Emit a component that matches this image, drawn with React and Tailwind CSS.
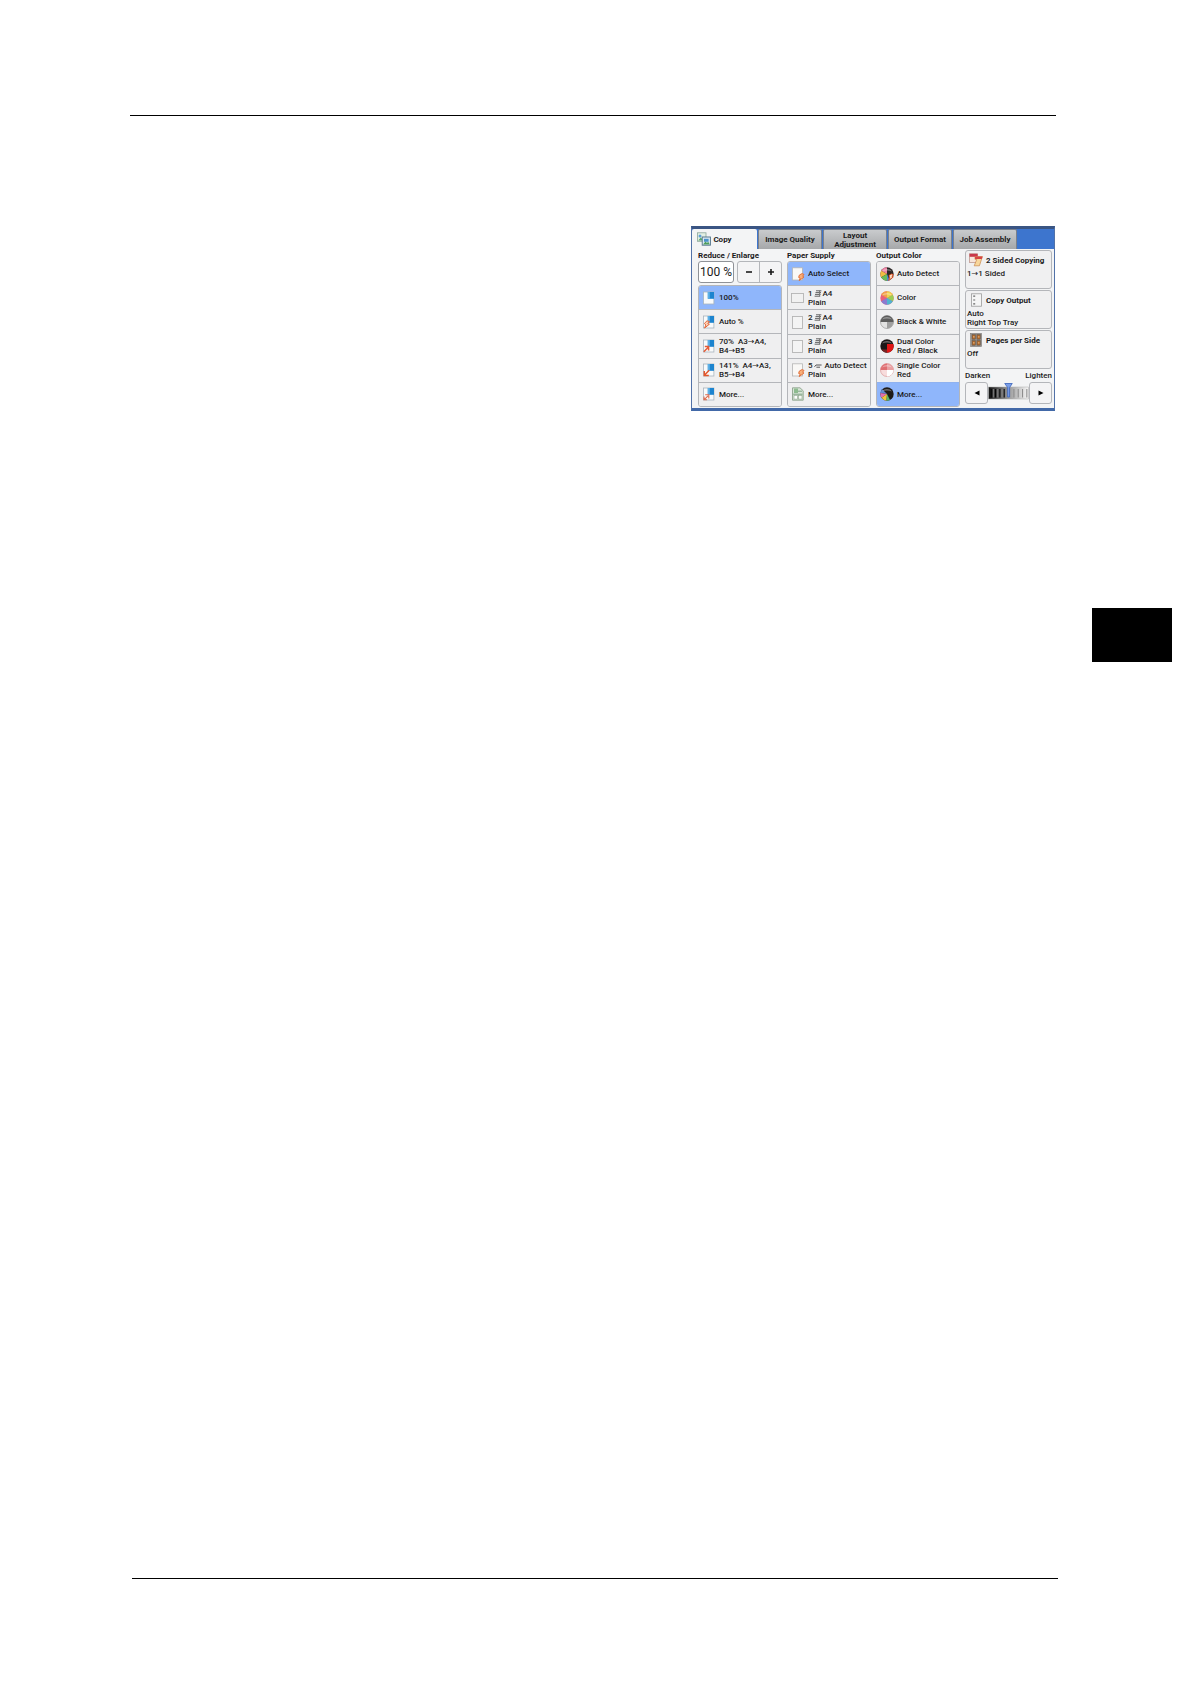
import React, { useState } from "react";

const BLACK = "#1b1b1b";

function CopyIcon() {
  return (
    <svg viewBox="0 0 14 14" className="h-[14px] w-[14px] shrink-0" aria-hidden="true">
      <rect x="0.5" y="0.8" width="8.5" height="8.5" fill="#e3efe3" stroke="#8aa59a" strokeWidth="0.8" />
      <circle cx="3" cy="4" r="1.5" fill="#5d9fd8" />
      <path d="M1.2 8.6 3.8 5.4 6.5 8.6z" fill="#58a86a" />
      <rect x="5.2" y="5" width="8.2" height="8.2" fill="#dbe9f3" stroke="#4d6f86" strokeWidth="0.9" />
      <rect x="7" y="6.8" width="4.6" height="3" fill="#4b93cc" />
      <path d="M6 12.6 8.5 9.6 10 11 11.2 9.8 12.9 12.6z" fill="#4e9e5c" />
    </svg>
  );
}

function ScaleIcon({ kind }) {
  return (
    <svg viewBox="0 0 12 14" className="h-[14px] w-[12px] shrink-0" aria-hidden="true">
      <rect x="0.5" y="1" width="10.4" height="12" fill="#f8fafb" stroke="#a9b4bd" strokeWidth="0.8" />
      <rect x="4.8" y="1" width="6.2" height="6.8" fill="#1c84cf" />
      <rect x="4.8" y="1" width="2" height="6.8" fill="#5db0e6" />
      {kind === "auto" && (
        <path d="M1.4 8.4 4 5.8 6.4 6.6 4.8 8.6 6.4 9.2 1.6 13 2.8 10z" fill="#fbd0b4" stroke="#e2592a" strokeWidth="0.9" />
      )}
      {kind === "reduce" && (
        <path d="M0.8 12.8 5 8.4M1.8 7.6H5.6V11.6" fill="none" stroke="#e45c37" strokeWidth="1.5" />
      )}
      {kind === "enlarge" && (
        <path d="M6.2 7.2 1.6 12M1.3 8V12.4H5.8" fill="none" stroke="#e4572b" strokeWidth="1.5" />
      )}
      {kind === "more" && (
        <path d="M1 12.8 5 8.8M2.2 7.8H5.8V11.4M1 9.5V12.8H4" fill="none" stroke="#df6b4d" strokeWidth="1.1" />
      )}
    </svg>
  );
}

function PaperIcon({ kind }) {
  return (
    <svg viewBox="0 0 14 14" className="h-[14px] w-[14px] shrink-0" aria-hidden="true">
      {kind === "wide" && <rect x="0.5" y="2.5" width="12" height="9" fill="#f1f1f1" stroke="#b4b4b4" strokeWidth="0.9" />}
      {kind === "tall" && <rect x="1.5" y="1.5" width="10" height="12" fill="#f4f4f4" stroke="#b4b4b4" strokeWidth="0.9" />}
      {(kind === "auto" || kind === "bypass") && (
        <>
          <rect x="1.4" y="0.8" width="10" height="12.2" fill="#f9f8f6" stroke="#b5b5b5" strokeWidth="0.8" />
          <path d="M8.4 8 11 6.6 13 7.4 11.6 9.2 13 10 8.2 13.6 9.2 11 7.6 10.4z" fill="#f8b07a" stroke="#e06a34" strokeWidth="0.9" />
        </>
      )}
      {kind === "more" && (
        <>
          <path d="M1.5 0.8H9l3.2 3V13.2H1.5z" fill="#d9e6d8" stroke="#839a83" strokeWidth="0.8" />
          <path d="M3 1.6H7V6H3z" fill="#8dbb8f" />
          <path d="M2.2 7.2H11.5M7 4.2H11" stroke="#7ea384" strokeWidth="1" />
          <rect x="3" y="8.5" width="3.4" height="3.6" fill="#fff" stroke="#8da58d" strokeWidth="0.6" />
          <rect x="7.6" y="8.5" width="3.4" height="3.6" fill="#f7faf6" stroke="#8da58d" strokeWidth="0.6" />
        </>
      )}
    </svg>
  );
}

function ColorIcon({ kind }) {
  return (
    <svg viewBox="0 0 14 14" className="h-[14px] w-[14px] shrink-0" aria-hidden="true">
      {kind === "detect" && (
        <>
          <circle cx="7" cy="7" r="6.7" fill="#2b2626" />
          <path d="M7 7V0.3A6.7 6.7 0 0 0 1.2 3.7z" fill="#ec84a5" />
          <path d="M7 7 1.2 3.7A6.7 6.7 0 0 0 1.2 10.3z" fill="#f2bb42" />
          <path d="M7 7 1.2 10.3A6.7 6.7 0 0 0 7 13.7z" fill="#6cbb59" />
          <path d="M7 7V13.7A6.7 6.7 0 0 0 9.6 13.2z" fill="#4b8ad2" />
          <path d="M9 8.4 11.4 7 13.4 7.6 12 9.4 13.2 10 8.6 13.4 9.6 10.8z" fill="#fbdcc4" stroke="#dc4f22" strokeWidth="0.9" />
        </>
      )}
      {kind === "color" && (
        <>
          <circle cx="7" cy="7" r="6.7" fill="#e8607a" />
          <path d="M7 7 1.2 3.7A6.7 6.7 0 0 1 7 0.3z" fill="#f0a04a" />
          <path d="M7 7V0.3A6.7 6.7 0 0 1 12.8 3.7z" fill="#f0d14e" />
          <path d="M7 7 12.8 3.7A6.7 6.7 0 0 1 12.8 10.3z" fill="#9bcf54" />
          <path d="M7 7 12.8 10.3A6.7 6.7 0 0 1 7 13.7z" fill="#4fb5cf" />
          <path d="M7 7V13.7A6.7 6.7 0 0 1 1.2 10.3z" fill="#8a7cd0" />
        </>
      )}
      {kind === "mono" && (
        <>
          <circle cx="7" cy="7" r="6.5" fill="#e2e2e2" stroke="#777" strokeWidth="0.5" />
          <path d="M7 7H0.5A6.5 6.5 0 0 1 13.5 7z" fill="#5d5d5d" />
          <path d="M7 7H13.4A6.5 6.5 0 0 1 7 13.5z" fill="#a0a0a0" />
        </>
      )}
      {kind === "dual" && (
        <>
          <circle cx="7" cy="7" r="6.7" fill="#1c1717" />
          <path d="M7 5H13.4A6.7 6.7 0 0 1 7 13.7z" fill="#e01616" />
          <path d="M7 10.5H1.5A6.7 6.7 0 0 0 7 13.7z" fill="#7a2424" />
        </>
      )}
      {kind === "single" && (
        <>
          <circle cx="7" cy="7" r="6.5" fill="#f7dcdc" stroke="#d98b8b" strokeWidth="0.6" />
          <path d="M7 7H0.5A6.5 6.5 0 0 1 7 0.5z" fill="#df6f72" />
          <path d="M7 7V0.5A6.5 6.5 0 0 1 13.5 7z" fill="#e99fa1" />
          <path d="M7 7H13.5A6.5 6.5 0 0 1 7 13.5z" fill="#fff" />
        </>
      )}
      {kind === "more" && (
        <>
          <circle cx="7" cy="7" r="6.7" fill="#1f1b19" />
          <path d="M7 7 2.3 2.3A6.7 6.7 0 0 0 0.4 6z" fill="#5b86cd" />
          <path d="M7 7 0.4 6A6.7 6.7 0 0 0 1.5 10.8z" fill="#e06fb0" />
          <path d="M7 7 1.5 10.8A6.7 6.7 0 0 0 6.5 13.7z" fill="#efc23d" />
          <path d="M7 7 6.5 13.7A6.7 6.7 0 0 0 10 13z" fill="#58b56a" />
        </>
      )}
      <path d="M2.2 4.6A5.6 5.6 0 0 1 11.8 4.6Q7 2.4 2.2 4.6z" fill="#fff" opacity="0.35" />
    </svg>
  );
}

function FeatureIcon({ kind }) {
  return (
    <svg viewBox="0 0 14 14" className="h-[14px] w-[14px] shrink-0" aria-hidden="true">
      {kind === "sided" && (
        <>
          <rect x="0.6" y="0.8" width="8" height="8.6" fill="#f7e5da" stroke="#b78d84" strokeWidth="0.7" />
          <rect x="0.6" y="0.8" width="8" height="3" fill="#c9384a" />
          <path d="M6 3.6H13.4L10.4 12.8H5.2L7.8 6.4H6z" fill="#f8d79c" stroke="#c98749" strokeWidth="0.7" />
          <path d="M6 3.4H13.6L12.8 6H6z" fill="#d64545" />
        </>
      )}
      {kind === "output" && (
        <>
          <rect x="2.4" y="0.8" width="10" height="12.4" fill="#f5f5f5" stroke="#9a9a9a" strokeWidth="0.8" />
          <path d="M4.2 3.2H6.2M4.2 7H6.2M4.2 10.8H6.2" stroke="#666" strokeWidth="1.2" />
        </>
      )}
      {kind === "pages" && (
        <>
          <rect x="1.6" y="0.4" width="11" height="13.2" fill="#a09d9a" stroke="#7b7876" strokeWidth="0.6" />
          {[1.6, 7.6].map((y) =>
            [3, 7.9].map((x) => (
              <g key={x + "-" + y}>
                <rect x={x} y={y} width="3.4" height="4.6" fill="#a5652f" stroke="#5b5047" strokeWidth="0.5" />
                <path d={`M${x + 1} ${y + 2.3}H${x + 2.6}`} stroke="#f0b071" strokeWidth="1.2" />
              </g>
            ))
          )}
        </>
      )}
    </svg>
  );
}

function Stack() {
  return (
    <svg viewBox="0 0 8 7" className="mx-px inline h-[7px] w-[8px] align-[-1px]" aria-hidden="true">
      <path d="M2 0.8H7.4M1.5 2.6H7M1 4.4H6.6M0.6 6.2H6.2" stroke="#555" strokeWidth="0.9" />
      <path d="M5.6 0.6V6.2" stroke="#777" strokeWidth="1" />
    </svg>
  );
}

function Bypass() {
  return (
    <svg viewBox="0 0 8 7" className="mx-px inline h-[7px] w-[8px] align-[-1px]" aria-hidden="true">
      <path d="M0.5 4.8 2 3H7.6M2.4 5.2H6" fill="none" stroke="#444" strokeWidth="0.9" />
    </svg>
  );
}

const tabs = ["Copy", "Image Quality", "Layout Adjustment", "Output Format", "Job Assembly"];

const ratios = [
  { icon: <ScaleIcon kind="full" />, lines: ["100%"] },
  { icon: <ScaleIcon kind="auto" />, lines: ["Auto %"] },
  { icon: <ScaleIcon kind="reduce" />, lines: ["70%  A3→A4,", "B4→B5"] },
  { icon: <ScaleIcon kind="enlarge" />, lines: ["141%  A4→A3,", "B5→B4"] },
  { icon: <ScaleIcon kind="more" />, lines: ["More..."] },
];

const papers = [
  { icon: <PaperIcon kind="auto" />, lines: ["Auto Select"] },
  { icon: <PaperIcon kind="wide" />, lines: [<>1<Stack />A4</>, "Plain"] },
  { icon: <PaperIcon kind="tall" />, lines: [<>2<Stack />A4</>, "Plain"] },
  { icon: <PaperIcon kind="tall" />, lines: [<>3<Stack />A4</>, "Plain"] },
  { icon: <PaperIcon kind="bypass" />, lines: [<>5<Bypass /> Auto Detect</>, "Plain"] },
  { icon: <PaperIcon kind="more" />, lines: ["More..."] },
];

const colors = [
  { icon: <ColorIcon kind="detect" />, lines: ["Auto Detect"] },
  { icon: <ColorIcon kind="color" />, lines: ["Color"] },
  { icon: <ColorIcon kind="mono" />, lines: ["Black & White"] },
  { icon: <ColorIcon kind="dual" />, lines: ["Dual Color", "Red / Black"] },
  { icon: <ColorIcon kind="single" />, lines: ["Single Color", "Red"] },
  { icon: <ColorIcon kind="more" />, lines: ["More..."] },
];

function OptionList({ label, items, initial }) {
  const [selected, setSelected] = useState(initial);
  return (
    <div role="group" aria-label={label} className="flex flex-1 flex-col overflow-hidden rounded-[3px] border border-[#b4b6ba]">
      {items.map((item, i) => (
        <button
          key={i}
          type="button"
          aria-pressed={selected === i}
          onClick={() => setSelected(i)}
          className={
            "flex min-h-0 flex-1 items-center gap-[3px] border-t pl-[3px] text-left text-[8px] leading-[9px] font-medium whitespace-pre first:border-t-0 " +
            (selected === i ? "border-[#8fb2f0] bg-[#8fb6fb]" : "border-[#b4b6ba] bg-[#efeff0]")
          }
        >
          <span className="flex w-[14px] shrink-0 justify-center">{item.icon}</span>
          <span>
            {item.lines.map((line, n) => (
              <span key={n} className="block">{line}</span>
            ))}
          </span>
        </button>
      ))}
    </div>
  );
}

function Feature({ icon, title, lines }) {
  return (
    <button type="button" className="flex h-[39px] flex-col rounded-[3px] border border-[#b4b6ba] bg-[#f0f0f1] pt-[2px] pl-px text-left text-[8px] leading-[9px] font-medium">
      <span className="flex items-center gap-[3px] pl-[2px] font-bold whitespace-nowrap">
        {icon}
        {title}
      </span>
      <span className="mt-[2px] block">
        {lines.map((line) => (
          <span key={line} className="block">{line}</span>
        ))}
      </span>
    </button>
  );
}

function Density() {
  return (
    <div className="relative flex-1">
      <svg viewBox="0 0 38 22" preserveAspectRatio="none" className="h-[22px] w-full" aria-hidden="true">
        <defs>
          <linearGradient id="density">
            <stop offset="0" stopColor="#111" />
            <stop offset="0.5" stopColor="#999" />
            <stop offset="1" stopColor="#f6f6f6" />
          </linearGradient>
        </defs>
        <rect x="0.5" y="5" width="37" height="12" fill="url(#density)" stroke="#aaa" strokeWidth="0.5" />
        {[3, 7, 11, 15, 24, 28, 32, 36].map((x) => (
          <path key={x} d={`M${x} 7V15.5`} stroke={x < 20 ? "#050505" : "#8d8d8d"} strokeWidth="1" />
        ))}
        {[5, 9, 13].map((x) => (
          <path key={x} d={`M${x} 7V15.5`} stroke="#8b8b8b" strokeWidth="0.8" />
        ))}
        <path d="M15.5 1.5H22.5L20 5.5V15H18.2V5.5z" fill="#7a9ee8" stroke="#3c66bd" strokeWidth="0.8" />
      </svg>
      <input type="range" min="-3" max="3" defaultValue="0" aria-label="Lighten / Darken" className="absolute inset-0 h-full w-full opacity-0" />
    </div>
  );
}

function ColumnTitle({ children }) {
  return <h2 className="h-[12px] text-[8px] leading-[14px] font-bold whitespace-nowrap">{children}</h2>;
}

function CopyPanel() {
  const [tab, setTab] = useState(0);
  const [zoom, setZoom] = useState(100);
  const small = "flex flex-1 items-center justify-center";
  return (
    <section aria-label="Copy" className="flex h-[185px] w-[364px] flex-col border-x border-t-[3px] border-b-[3px] border-x-[#5272a8] border-t-[#3a5583] border-b-[#4269a8] bg-[#f3f4f5]">
      <div role="tablist" className="flex h-[20px] shrink-0 gap-px bg-[#3d75ce]">
        {tabs.map((name, i) => (
          <button
            key={name}
            type="button"
            role="tab"
            aria-selected={tab === i}
            onClick={() => setTab(i)}
            className={
              "flex items-center justify-center gap-[2px] rounded-t-[2px] text-[8px] leading-[9px] font-bold " +
              (i === 0 ? "w-[65px] pr-5 " : "w-[64px] ") +
              (tab === i ? "bg-[#f3f4f5]" : "border border-b-0 border-[#7a808a] bg-linear-to-b from-[#c9cbcd] to-[#a6a8aa]")
            }
          >
            {i === 0 && <CopyIcon />}
            {name}
          </button>
        ))}
      </div>
      <div className="flex flex-1 gap-[5px] pr-[2px] pl-[6px]">
        <div className="flex min-w-0 flex-1 flex-col pb-px">
          <ColumnTitle>Reduce / Enlarge</ColumnTitle>
          <div className="mb-[2px] flex h-[22px] gap-[3px]">
            <label className="flex w-[36px] rounded-[3px] border border-[#8f9297] bg-white">
              <input
                aria-label="Ratio"
                value={zoom + " %"}
                onChange={(e) => setZoom(parseInt(e.target.value, 10) || 100)}
                className="w-full min-w-0 bg-transparent text-center text-[12px] leading-[14px] outline-none"
              />
            </label>
            <div className="flex flex-1 rounded-[3px] border border-[#b4b6ba] bg-[#f4f4f5]">
              <button type="button" aria-label="Reduce" onClick={() => setZoom(zoom - 1)} className={small}>
                <svg viewBox="0 0 8 8" className="h-2 w-2"><path d="M1 4H7" stroke={BLACK} strokeWidth="1.6" /></svg>
              </button>
              <button type="button" aria-label="Enlarge" onClick={() => setZoom(zoom + 1)} className={small + " border-l border-[#b4b6ba]"}>
                <svg viewBox="0 0 8 8" className="h-2 w-2"><path d="M1 4H7M4 1V7" stroke={BLACK} strokeWidth="1.6" /></svg>
              </button>
            </div>
          </div>
          <OptionList label="Reduce / Enlarge" items={ratios} initial={0} />
        </div>
        <div className="flex min-w-0 flex-1 flex-col pb-px">
          <ColumnTitle>Paper Supply</ColumnTitle>
          <OptionList label="Paper Supply" items={papers} initial={0} />
        </div>
        <div className="flex min-w-0 flex-1 flex-col pb-px">
          <ColumnTitle>Output Color</ColumnTitle>
          <OptionList label="Output Color" items={colors} initial={5} />
        </div>
        <div className="flex w-[87px] flex-col gap-px pt-px">
          <Feature icon={<FeatureIcon kind="sided" />} title="2 Sided Copying" lines={["1→1 Sided"]} />
          <Feature icon={<FeatureIcon kind="output" />} title="Copy Output" lines={["Auto", "Right Top Tray"]} />
          <Feature icon={<FeatureIcon kind="pages" />} title="Pages per Side" lines={["Off"]} />
          <div className="flex h-[11px] items-center justify-between text-[8px] leading-[9px] font-medium">
            <span>Darken</span>
            <span>Lighten</span>
          </div>
          <div className="flex h-[22px] items-stretch">
            <button type="button" aria-label="Darken" className="flex w-[23px] items-center justify-center rounded-[3px] border border-[#b4b6ba] bg-[#f4f4f5]">
              <svg viewBox="0 0 6 6" className="h-[6px] w-[6px]"><path d="M5.5 0.5V5.5L0.5 3z" fill="#000" /></svg>
            </button>
            <Density />
            <button type="button" aria-label="Lighten" className="flex w-[23px] items-center justify-center rounded-[3px] border border-[#b4b6ba] bg-[#f4f4f5]">
              <svg viewBox="0 0 6 6" className="h-[6px] w-[6px]"><path d="M0.5 0.5V5.5L5.5 3z" fill="#000" /></svg>
            </button>
          </div>
        </div>
      </div>
    </section>
  );
}

export default function App() {
  return (
    <main className="flex min-h-screen flex-col bg-white pt-[115px] pb-[105px] font-['Roboto','DejaVu_Sans',sans-serif] text-[#1b1b1b]">
      <hr className="mr-[134px] ml-[130px] border-t border-black" />
      <div className="mt-[110px] mr-[135px] self-end">
        <CopyPanel />
      </div>
      <div className="mt-[197px] mr-[18px] h-[54px] w-[80px] self-end bg-black" />
      <hr className="mt-auto mr-[132px] ml-[132px] border-t border-black" />
    </main>
  );
}
